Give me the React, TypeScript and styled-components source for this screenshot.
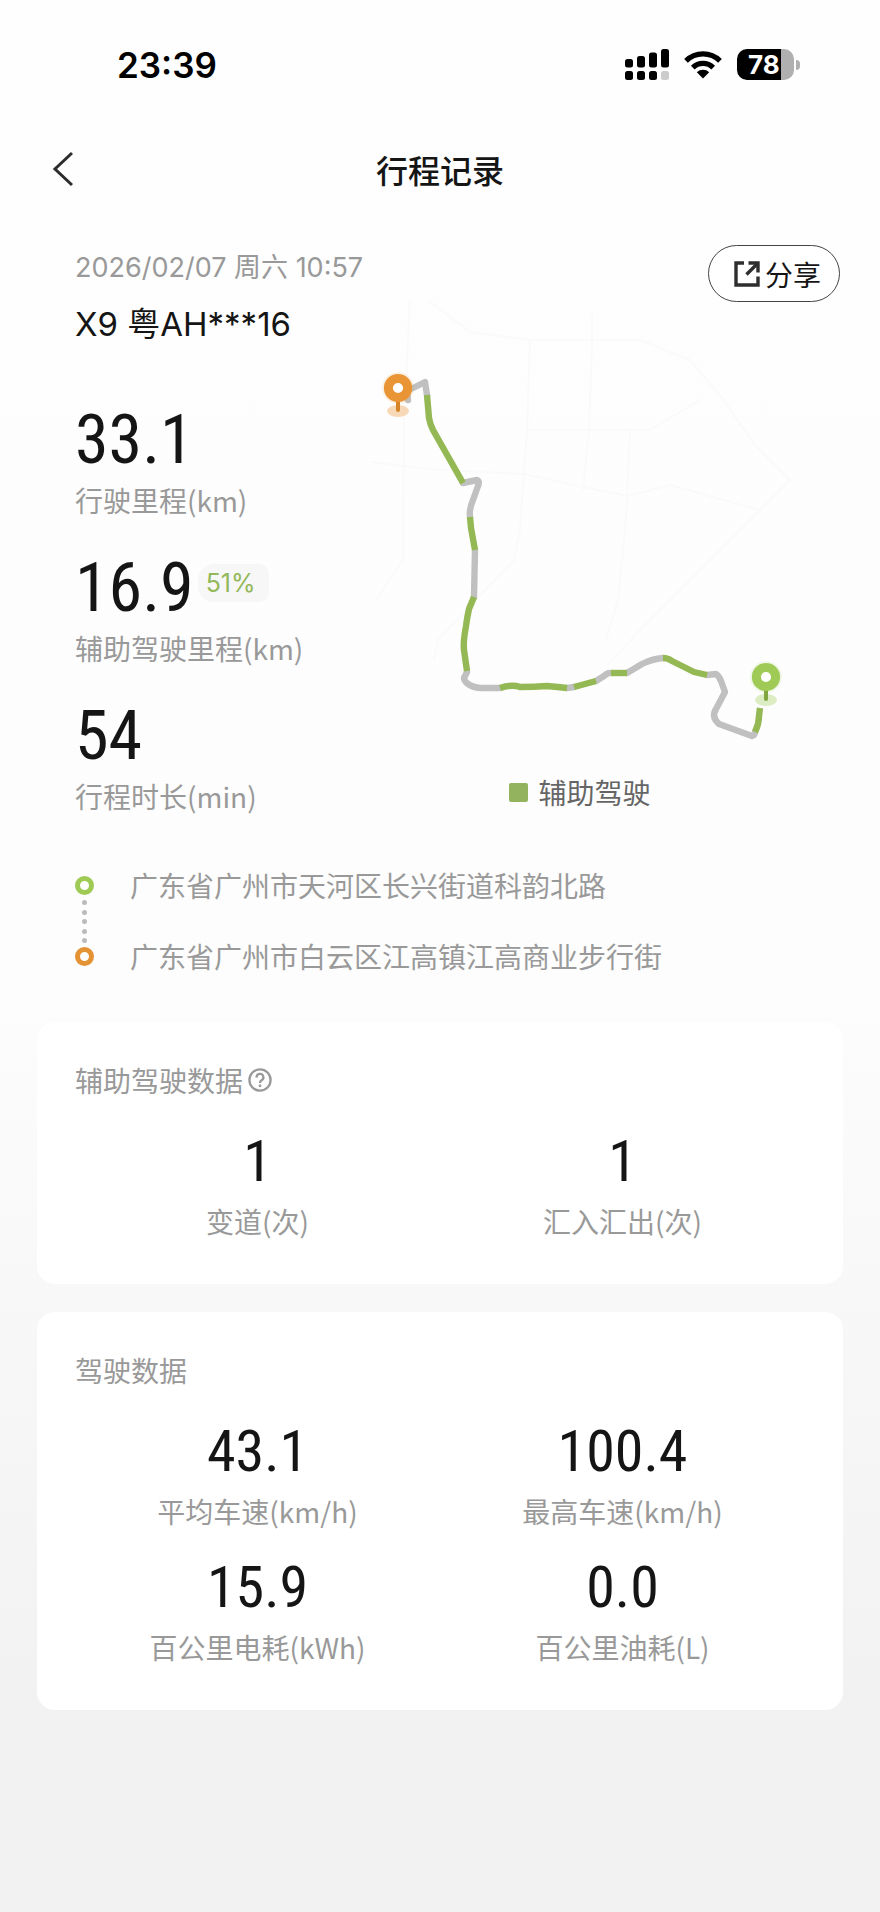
import React from "react";
import styled, { createGlobalStyle } from "styled-components";

const GlobalStyle = createGlobalStyle`
  * { box-sizing: border-box; }
  html { background: #f2f2f2; }
  body {
    margin: 0;
    color: #151515;
    font-family: "Noto Sans CJK SC", sans-serif;
    font-size: 28px;
    line-height: 40px;
  }
  h1, h2, p, dl, dd, dt, ol { margin: 0; padding: 0; font-weight: 400; }
  button { font: inherit; color: inherit; margin: 0; padding: 0; background: none; border: 0; cursor: pointer; }
`;

const Page = styled.div`
  min-height: 100vh;
  padding-bottom: 80px;
  background: linear-gradient(to bottom, #fefefe 0, #fdfdfd 960px, #f2f2f2 1680px);
`;

const StatusBar = styled.div`
  display: flex;
  align-items: center;
  justify-content: space-between;
  height: 129px;
  padding: 0 80px 0 117px;
`;

const Clock = styled.time`
  font-family: Inter, sans-serif;
  font-size: 35px;
  font-weight: 600;
  color: #000;
`;

const StatusIcons = styled.div`
  display: flex;
  align-items: center;
  gap: 15px;
`;

const Battery = styled.div`
  display: flex;
  align-items: center;
  gap: 2px;
`;

const BatteryBody = styled.div`
  display: flex;
  align-items: center;
  width: 57px;
  height: 31px;
  padding-left: 11px;
  border-radius: 10px;
  background: linear-gradient(to right, #000 78%, #b0b0b0 78%);
  color: #fff;
  font-family: Inter, sans-serif;
  font-size: 26px;
  font-weight: 700;
  line-height: 31px;
`;

const BatteryTip = styled.span`
  width: 4px;
  height: 10px;
  border-radius: 0 4px 4px 0;
  background: #b0b0b0;
`;

const NavBar = styled.header`
  display: grid;
  grid-template-columns: 1fr auto 1fr;
  align-items: center;
  height: 80px;
  padding: 0 47px;
`;

const BackButton = styled.button`
  display: flex;
  justify-self: start;
`;

const PageTitle = styled.h1`
  && { font-weight: 500; }
  font-size: 32px;
  line-height: 48px;
`;

const TripHeader = styled.section`
  display: flex;
  align-items: flex-start;
  justify-content: space-between;
  padding: 36px 40px 0 75px;
`;

const TripInfo = styled.div`
  font-family: Inter, "Noto Sans CJK SC", sans-serif;
`;

const TripDate = styled.p`
  font-size: 27px;
  line-height: 46px;
  color: #999;
`;

const TripCar = styled.p`
  padding-top: 12px;
  font-size: 33px;
  line-height: 42px;
`;

const ShareButton = styled.button`
  display: flex;
  align-items: center;
  gap: 5px;
  height: 57px;
  padding: 0 18px 0 25px;
  border: 1px solid #444;
  border-radius: 29px;
  background: #fff;
`;

const TripBody = styled.section`
  display: grid;
  grid-template-columns: 285px 1fr;
  padding: 0 80px 0 75px;
`;

const TripStats = styled.dl`
  display: flex;
  flex-direction: column;
  gap: 32px;
  padding-top: 59px;
`;

const Stat = styled.div<{ $centered?: boolean }>`
  display: flex;
  flex-direction: column-reverse;
  text-align: ${(p) => (p.$centered ? "center" : "left")};
`;

const StatLabel = styled.dt`
  color: #999;
`;

const StatValue = styled.dd<{ $small?: boolean }>`
  && { padding-bottom: ${(p) => (p.$small ? 8 : 4)}px; }
  display: flex;
  align-items: flex-start;
  gap: 4px;
  justify-content: ${(p) => (p.$small ? "center" : "flex-start")};
  font-family: "Roboto Condensed", Roboto, sans-serif;
  font-size: ${(p) => (p.$small ? 58 : 68)}px;
  line-height: ${(p) => (p.$small ? 64 : 72)}px;
`;

const ShareOfTrip = styled.span`
  margin-top: 12px;
  padding: 0 13px 0 8px;
  border-radius: 16px 10px 10px 16px;
  background: #f7f7f7;
  color: #93b85a;
  font-family: Inter, sans-serif;
  font-size: 25px;
  line-height: 38px;
`;

const MapPanel = styled.figure`
  margin: 0;
`;

const RouteMap = styled.svg`
  display: block;
  width: 100%;
  overflow: visible;
`;

const Legend = styled.figcaption`
  display: flex;
  align-items: center;
  justify-content: center;
  gap: 10px;
  padding-top: 16px;
  color: #666;
`;

const LegendSwatch = styled.span`
  width: 19px;
  height: 19px;
  border-radius: 2px;
  background: #93b35f;
`;

const Places = styled.ol`
  display: flex;
  flex-direction: column;
  padding: 49px 75px 0;
  list-style: none;
`;

const Place = styled.li`
  display: flex;
  align-items: center;
  gap: 36px;
  color: #999;
`;

const PlaceDot = styled.span<{ $color: string }>`
  flex: none;
  width: 19px;
  height: 19px;
  border: 5px solid ${(p) => p.$color};
  border-radius: 50%;
  background: #fff;
`;

const PlaceLink = styled.li`
  display: flex;
  flex-direction: column;
  align-items: center;
  justify-content: space-between;
  width: 19px;
  height: 43px;
  margin: -5px 0 -7px;
`;

const LinkDot = styled.span`
  width: 5px;
  height: 5px;
  border-radius: 50%;
  background: #bbb;
`;

const Cards = styled.main`
  display: flex;
  flex-direction: column;
  gap: 28px;
  padding: 46px 37px 0;
`;

const Card = styled.section`
  padding: 38px 38px 43px;
  border-radius: 18px;
  background: #fff;
`;

const CardTitle = styled.h2`
  display: flex;
  align-items: center;
  gap: 5px;
  font-size: 28px;
  color: #999;
`;

const HelpButton = styled.button`
  display: flex;
`;

const StatGrid = styled.dl`
  display: grid;
  grid-template-columns: 1fr 1fr;
  row-gap: 24px;
  && { padding-top: 29px; }
`;

const GREEN = "#94b954";
const GREY = "#c0c0c0";

const roads = [
  "M428 300 L470 332 L530 340 H640 L690 360 L720 395 L755 445 L790 480 L730 540 L640 630 L608 665",
  "M592 315 V345 L589 430 L583 490",
  "M528 430 H650 L700 400",
  "M530 340 L527 430 L520 530 L514 560 L438 640 L434 660",
  "M370 462 L440 470 L525 474 L583 487 L628 496 L670 485 L760 510",
  "M630 430 L626 520 L618 600 L606 640",
  "M410 300 L404 420 L403 560 L376 600",
];

const routeParts: { color: string; d: string }[] = [
  { color: GREY, d: "M408 400 L407 391 L413 388 L425 382 L427 395" },
  { color: GREY, d: "M463 483 L477 480 Q480 481 478 486 L473 500 Q469 509 470 517" },
  { color: GREY, d: "M475 550 L474 597" },
  { color: GREY, d: "M467 672 L464 678 Q464 681 468 684 Q474 688 482 688 L500 688" },
  { color: GREY, d: "M567 688 L574 687" },
  { color: GREY, d: "M596 681 L604 676 Q607 673 610 673" },
  { color: GREY, d: "M627 673 L642 664 Q652 659 663 658" },
  { color: GREY, d: "M707 675 L716 674 Q719 676 721 681 L725 692 L716 709 Q711 717 719 724 L752 736 Q755 735 755 732" },
  { color: GREEN, d: "M427 395 L429 418 Q430 424 433 430 L463 483" },
  { color: GREEN, d: "M470 517 L471 528 L475 550" },
  { color: GREEN, d: "M474 597 L469 609 Q467 618 466 626 Q463 642 464 650 L467 671" },
  { color: GREEN, d: "M500 688 Q512 684 520 687 Q535 687 547 686 Q558 687 567 688" },
  { color: GREEN, d: "M574 687 L596 681" },
  { color: GREEN, d: "M611 673 L627 673" },
  { color: GREEN, d: "M663 658 Q668 658 672 661 L694 672 L707 675" },
  { color: GREEN, d: "M755 732 Q759 724 759 716 L760 708" },
];

const Pin = ({ x, y, color, stem }: { x: number; y: number; color: string; stem: string }) => (
  <g>
    <ellipse cx={x} cy={y + 23} rx="11" ry="6" fill={color} opacity="0.35" />
    <circle cx={x} cy={y} r="16" fill={color} opacity="0.12" />
    <path d={`M${x} ${y + 12} V${y + 22}`} stroke={stem} strokeWidth="4" strokeLinecap="round" />
    <circle cx={x} cy={y} r="9.6" fill="#fff" stroke={color} strokeWidth="9" />
  </g>
);

const RouteDrawing = () => (
  <RouteMap viewBox="360 345 440 411" fill="none" role="img" aria-label="行程路线">
    <g stroke="#fafafa" strokeWidth="2">
      {roads.map((d) => (
        <path key={d} d={d} />
      ))}
    </g>
    <g strokeWidth="6.4" strokeLinejoin="round" strokeLinecap="round">
      {routeParts.map((p) => (
        <path key={p.d} d={p.d} stroke={p.color} strokeLinecap={p.color === GREEN ? "butt" : "round"} />
      ))}
    </g>
    <Pin x={398} y={388} color="#ea9535" stem="#d68428" />
    <Pin x={766} y={677} color="#9fca56" stem="#7fa63f" />
  </RouteMap>
);

const SignalIcon = () => (
  <svg width="44" height="31" viewBox="0 0 44 31" aria-hidden="true">
    <rect x="0" y="10" width="8" height="8.500" rx="2.500" />
    <rect x="12" y="7" width="8" height="11.500" rx="2.500" />
    <rect x="24" y="3.500" width="8" height="15" rx="2.500" />
    <rect x="36" y="0" width="8" height="18.500" rx="2.500" />
    <rect x="0" y="22" width="8" height="9" rx="2.500" />
    <rect x="12" y="22" width="8" height="9" rx="2.500" />
    <rect x="24" y="22" width="8" height="9" rx="2.500" />
    <rect x="36" y="22" width="8" height="9" rx="2.500" fill="#ccc" />
  </svg>
);

const WifiIcon = () => (
  <svg width="38" height="29" viewBox="0 0 38 29" aria-hidden="true">
    <path d="M19 28.500 L12.800 22.200 A9 9 0 0 1 25.200 22.200 Z" />
    <path d="M8.800 17.600 A14.500 14.500 0 0 1 29.200 17.600" fill="none" stroke="#000" strokeWidth="5.200" />
    <path d="M2 10.800 A24.200 24.200 0 0 1 36 10.800" fill="none" stroke="#000" strokeWidth="5.200" />
  </svg>
);

const BackIcon = () => (
  <svg width="26" height="36" viewBox="0 0 26 36" fill="none" stroke="#2c2c2c" strokeWidth="3" aria-hidden="true">
    <path d="M25 2 L8 18 L25 34" />
  </svg>
);

const ShareIcon = () => (
  <svg width="26" height="26" viewBox="0 0 26 26" fill="none" stroke="#2e2e2e" strokeWidth="3.400" aria-hidden="true">
    <path d="M10 2 H2 V24 H24 V15.500" />
    <path d="M14.500 2 H24 V11.500" />
    <path d="M24 2 L12.500 13.500" />
  </svg>
);

const HelpIcon = () => (
  <svg width="24" height="24" viewBox="0 0 24 24" fill="none" stroke="#999" strokeWidth="2.300" aria-hidden="true">
    <circle cx="12" cy="12" r="10.600" />
    <path d="M8.600 9.600 A3.400 3.400 0 1 1 13.600 12.300 Q12 13.200 12 15" />
    <circle cx="12" cy="17.800" r="1.400" fill="#999" stroke="none" />
  </svg>
);

type StatData = { label: string; value: string; share?: string };

const tripStats: StatData[] = [
  { label: "行驶里程(km)", value: "33.1" },
  { label: "辅助驾驶里程(km)", value: "16.9", share: "51%" },
  { label: "行程时长(min)", value: "54" },
];

const assistStats: StatData[] = [
  { label: "变道(次)", value: "1" },
  { label: "汇入汇出(次)", value: "1" },
];

const driveStats: StatData[] = [
  { label: "平均车速(km/h)", value: "43.1" },
  { label: "最高车速(km/h)", value: "100.4" },
  { label: "百公里电耗(kWh)", value: "15.9" },
  { label: "百公里油耗(L)", value: "0.0" },
];

const CenteredStats = ({ items }: { items: StatData[] }) => (
  <StatGrid>
    {items.map((s) => (
      <Stat key={s.label} $centered>
        <StatLabel>{s.label}</StatLabel>
        <StatValue $small>{s.value}</StatValue>
      </Stat>
    ))}
  </StatGrid>
);

export default function App() {
  return (
    <Page>
      <GlobalStyle />
      <StatusBar>
        <Clock>23:39</Clock>
        <StatusIcons>
          <SignalIcon />
          <WifiIcon />
          <Battery>
            <BatteryBody>78</BatteryBody>
            <BatteryTip />
          </Battery>
        </StatusIcons>
      </StatusBar>
      <NavBar>
        <BackButton type="button" aria-label="返回">
          <BackIcon />
        </BackButton>
        <PageTitle>行程记录</PageTitle>
      </NavBar>
      <TripHeader>
        <TripInfo>
          <TripDate>2026/02/07 周六 10:57</TripDate>
          <TripCar>X9 粤AH***16</TripCar>
        </TripInfo>
        <ShareButton type="button">
          <ShareIcon />
          分享
        </ShareButton>
      </TripHeader>
      <TripBody>
        <TripStats>
          {tripStats.map((s) => (
            <Stat key={s.label}>
              <StatLabel>{s.label}</StatLabel>
              <StatValue>
                {s.value}
                {s.share && <ShareOfTrip>{s.share}</ShareOfTrip>}
              </StatValue>
            </Stat>
          ))}
        </TripStats>
        <MapPanel>
          <RouteDrawing />
          <Legend>
            <LegendSwatch />
            辅助驾驶
          </Legend>
        </MapPanel>
      </TripBody>
      <Places>
        <Place>
          <PlaceDot $color="#9fca56" />
          广东省广州市天河区长兴街道科韵北路
        </Place>
        <PlaceLink aria-hidden="true">
          {[0, 1, 2, 3, 4].map((n) => (
            <LinkDot key={n} />
          ))}
        </PlaceLink>
        <Place>
          <PlaceDot $color="#e39234" />
          广东省广州市白云区江高镇江高商业步行街
        </Place>
      </Places>
      <Cards>
        <Card>
          <CardTitle>
            辅助驾驶数据
            <HelpButton type="button" aria-label="说明">
              <HelpIcon />
            </HelpButton>
          </CardTitle>
          <CenteredStats items={assistStats} />
        </Card>
        <Card>
          <CardTitle>驾驶数据</CardTitle>
          <CenteredStats items={driveStats} />
        </Card>
      </Cards>
    </Page>
  );
}
